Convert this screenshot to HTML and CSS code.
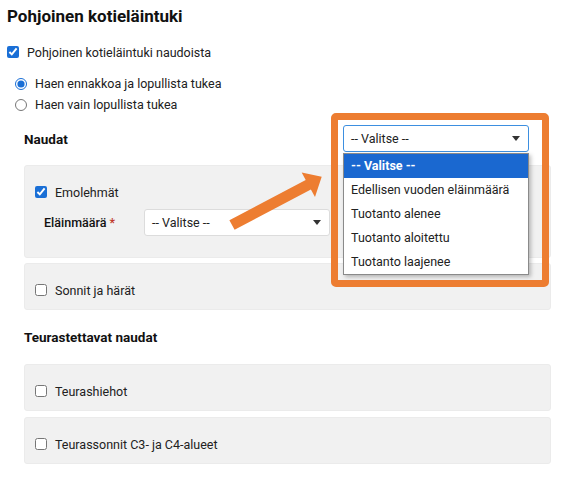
FILE: index.html
```html
<!DOCTYPE html>
<html lang="fi">
<head>
<meta charset="utf-8">
<title>Pohjoinen kotieläintuki</title>
<link rel="stylesheet" href="styles.css">
</head>
<body>
<div class="page">
  <h1 class="title">Pohjoinen kotieläintuki</h1>
  <label class="row top-check"><input type="checkbox" class="cb" checked><span>Pohjoinen kotieläintuki naudoista</span></label>
  <div class="radios">
    <label class="row radio-row"><input type="radio" name="tuki" class="rb" checked><span>Haen ennakkoa ja lopullista tukea</span></label>
    <label class="row radio-row"><input type="radio" name="tuki" class="rb"><span>Haen vain lopullista tukea</span></label>
  </div>

  <section class="group">
    <div class="group-head">
      <h2 class="group-title">Naudat</h2>
      <div class="select select-focus"><span>-- Valitse --</span><svg class="caret" width="8" height="5" viewBox="0 0 8 5"><path d="M0 0h8L4 5z"/></svg></div>
    </div>
    <div class="panel panel-open">
      <label class="row"><input type="checkbox" class="cb" checked><span>Emolehmät</span></label>
      <div class="field">
        <span class="field-label">Eläinmäärä <span class="req">*</span></span>
        <div class="select select-field"><span>-- Valitse --</span><svg class="caret" width="8" height="5" viewBox="0 0 8 5"><path d="M0 0h8L4 5z"/></svg></div>
      </div>
    </div>
    <div class="panel">
      <label class="row"><input type="checkbox" class="cb"><span>Sonnit ja härät</span></label>
    </div>
  </section>

  <section class="group">
    <h2 class="group-title plain">Teurastettavat naudat</h2>
    <div class="panel">
      <label class="row"><input type="checkbox" class="cb"><span>Teurashiehot</span></label>
    </div>
    <div class="panel">
      <label class="row"><input type="checkbox" class="cb"><span>Teurassonnit C3- ja C4-alueet</span></label>
    </div>
  </section>

  <ul class="dropdown">
    <li class="opt opt-active">-- Valitse --</li>
    <li class="opt">Edellisen vuoden eläinmäärä</li>
    <li class="opt">Tuotanto alenee</li>
    <li class="opt">Tuotanto aloitettu</li>
    <li class="opt">Tuotanto laajenee</li>
  </ul>
  <div class="frame"></div>
  <svg class="arrow" width="570" height="488" viewBox="0 0 570 488">
    <polygon points="229.4,220.2 305.7,179.9 301.7,172.4 321.7,176.7 315,197 310.9,189.5 234.6,229.8" fill="#ED7D31"/>
  </svg>
</div>
</body>
</html>
```
FILE: styles.css
```css
* { box-sizing: border-box; }
html, body { margin: 0; padding: 0; background: #fff; }
body {
  font-family: Roboto, "Liberation Sans", Arial, sans-serif;
  font-size: 12.5px;
  color: #212121;
}
.page {
  position: relative;
  width: 570px;
  height: 488px;
  padding: 6px 19px 0 7px;
  overflow: hidden;
}
.title {
  margin: 0;
  font-size: 17px;
  line-height: 20px;
  font-weight: 700;
  color: #111;
}
.row {
  display: flex;
  align-items: center;
  height: 20px;
  gap: 8px;
}
.top-check { margin-top: 16px; }
.radios {
  margin-top: 11px;
  padding-left: 8px;
}
.radio-row { height: 21px; }
.cb {
  width: 12px;
  height: 12px;
  margin: 0;
  accent-color: #1a6fd6;
}
.rb {
  width: 12px;
  height: 12px;
  margin: 0;
  accent-color: #1a6fd6;
}
.group { margin-left: 17px; }
.group-head {
  display: flex;
  align-items: center;
  justify-content: space-between;
  margin-top: 10px;
  height: 27px;
  padding-right: 22px;
}
.group-title {
  margin: 0;
  font-size: 13.5px;
  line-height: 20px;
  font-weight: 700;
  color: #111;
}
.group-title.plain { margin: 17px 0 17px 0; }
.select {
  display: flex;
  align-items: center;
  justify-content: space-between;
  height: 27px;
  background: #fff;
  border: 1px solid #dcdcdc;
  border-radius: 3px;
  padding: 0 8px 0 7px;
  color: #222;
}
.select-focus {
  width: 186px;
  border-color: #3d8fe0;
}
.select-field { width: 186px; }
.caret { fill: #333; }
.panel {
  background: #f1f1f1;
  border: 1px solid #ebebeb;
  border-radius: 3px;
  padding: 16px 10px 9px 10px;
  margin-bottom: 5px;
}
.group-head + .panel { margin-top: 13px; }
.panel-open { padding-bottom: 21px; }
.field {
  display: flex;
  align-items: center;
  margin-top: 7px;
  padding-left: 9px;
}
.field-label {
  width: 100px;
  font-weight: 500;
  color: #111;
}
.req { color: #c0392b; }
.group + .group .panel + .panel { margin-top: 6px; }

.dropdown {
  position: absolute;
  left: 343px;
  top: 153px;
  width: 186px;
  margin: 0;
  padding: 0;
  list-style: none;
  background: #fff;
  border: 1px solid #8a8a8a;
  box-shadow: 2px 2px 4px rgba(0,0,0,0.25);
}
.opt {
  height: 24px;
  line-height: 24px;
  padding-left: 7px;
  color: #222;
}
.opt-active {
  background: #1a68d0;
  color: #fff;
  font-weight: 700;
}
.frame {
  position: absolute;
  left: 331px;
  top: 113px;
  width: 218px;
  height: 174px;
  border: 7px solid #ED7D31;
  border-radius: 5px;
}
.arrow {
  position: absolute;
  left: 0;
  top: 0;
}
```
